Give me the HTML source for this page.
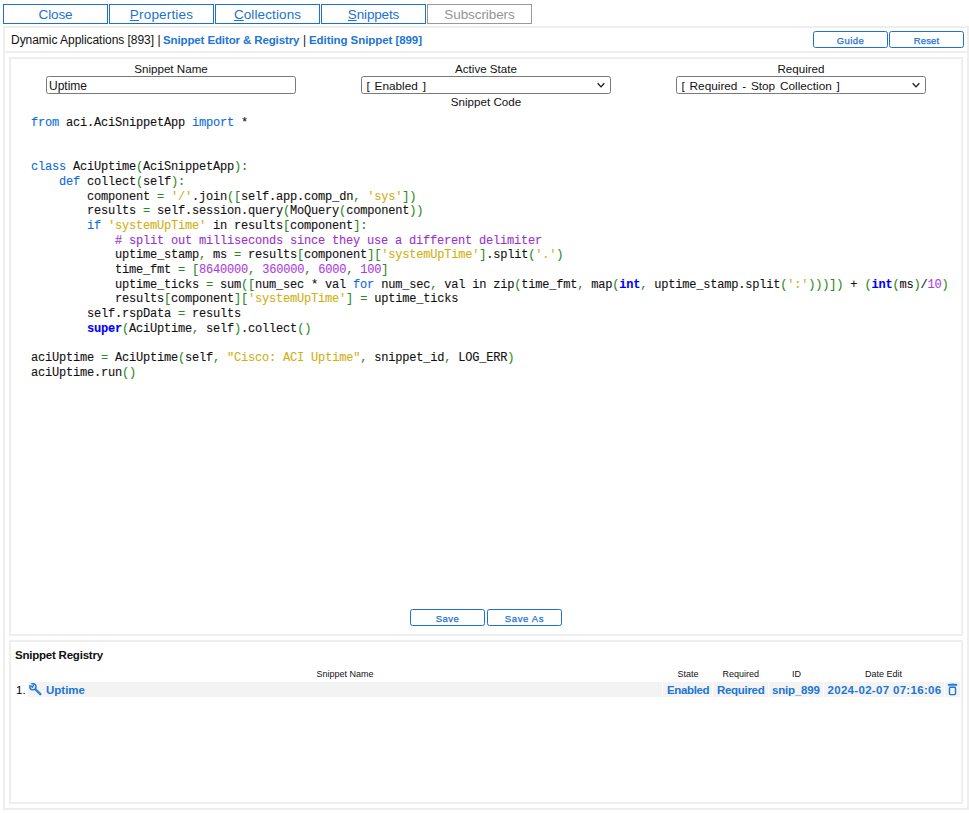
<!DOCTYPE html>
<html>
<head>
<meta charset="utf-8">
<title>Snippet Editor</title>
<style>
html,body{margin:0;padding:0;background:#fff;}
body{width:969px;height:813px;position:relative;overflow:hidden;font-family:"Liberation Sans",sans-serif;font-size:12px;color:#111;}
.abs{position:absolute;}
.tab{position:absolute;top:4px;height:18px;width:103px;border:1px solid #1b71d1;color:#1b71d1;font-size:13.5px;line-height:20px;text-align:center;background:#fff;}
.tab.dis{border-color:#999;color:#949494;}
.tab u{text-decoration:underline;text-underline-offset:1px;text-decoration-thickness:1px;}
.frame{position:absolute;border:2px solid #eee;box-sizing:border-box;}
.hline{position:absolute;background:#eee;}
.btn{position:absolute;box-sizing:border-box;border:1px solid #1b71d1;border-radius:2.5px;color:#1b71d1;font-size:9.5px;text-align:center;background:#fff;width:75px;height:17px;line-height:17px;-webkit-text-stroke:0.25px #1b71d1;}
.lbl{position:absolute;font-size:11.6px;line-height:14px;text-align:center;color:#111;white-space:nowrap;}
.inp{position:absolute;box-sizing:border-box;border:1px solid #7a7a7a;border-radius:2.5px;background:#fff;font-size:12px;line-height:16px;color:#111;white-space:nowrap;}
.chev{position:absolute;right:4px;top:5px;}
.code{position:absolute;left:31px;top:116px;font-family:"Liberation Mono",monospace;font-size:12px;letter-spacing:-0.2px;color:#111;white-space:pre;-webkit-text-stroke:0.1px currentColor;}
.code div{position:absolute;left:0;height:15px;line-height:15px;}
.k{color:#0b6be0;} .b{color:#0000ff;font-weight:bold;} .s{color:#d0b010;} .c{color:#9932cc;} .n{color:#ac3fdc;} .p{color:#2a8a22;}
.hd{font-size:12px;line-height:14px;white-space:nowrap;}
.rh{position:absolute;top:669px;font-size:9px;line-height:11px;color:#111;white-space:nowrap;}
.cell{position:absolute;top:682px;height:15px;background:#f3f3f3;}
.rt{position:absolute;top:683px;line-height:14px;color:#2075d5;font-weight:bold;white-space:nowrap;}
.link{color:#2075d5;font-weight:bold;}
</style>
</head>
<body>
<div class="tab" style="left:3px;letter-spacing:-0.14px">Close</div>
<div class="tab" style="left:109px;letter-spacing:0.18px"><u>P</u>roperties</div>
<div class="tab" style="left:215px;letter-spacing:0.11px"><u>C</u>ollections</div>
<div class="tab" style="left:321px;letter-spacing:-0.15px"><u>S</u>nippets</div>
<div class="tab dis" style="left:427px;letter-spacing:-0.08px">Subscribers</div>

<div class="frame" style="left:3px;top:26px;width:966px;height:784px;"></div>
<div class="hline" style="left:5px;top:51px;width:962px;height:2px;"></div>

<div class="abs hd" style="left:11px;top:33px;letter-spacing:-0.04px;">Dynamic Applications [893]</div>
<div class="abs hd" style="left:157.5px;top:33px;">|</div>
<div class="abs hd link" style="left:163px;top:33px;font-size:11.5px;letter-spacing:-0.12px;">Snippet Editor &amp; Registry</div>
<div class="abs hd" style="left:303px;top:33px;">|</div>
<div class="abs hd link" style="left:309px;top:33px;font-size:11.5px;letter-spacing:-0.07px;">Editing Snippet [899]</div>
<div class="btn" style="left:813px;top:31px;letter-spacing:0.45px;">Guide</div>
<div class="btn" style="left:889px;top:31px;letter-spacing:0.15px;">Reset</div>

<div class="frame" style="left:9px;top:57px;width:954px;height:579px;"></div>

<div class="lbl" style="left:46px;top:62px;width:250px;">Snippet Name</div>
<div class="lbl" style="left:361px;top:62px;width:250px;">Active State</div>
<div class="lbl" style="left:676px;top:62px;width:250px;">Required</div>
<div class="inp" style="left:46px;top:76px;width:250px;height:18px;padding-left:2px;line-height:18px;">Uptime</div>
<div class="inp" style="left:361px;top:76px;width:250px;height:18px;padding-left:4.5px;font-size:11.8px;word-spacing:1.5px;line-height:18px;">[ Enabled ]<svg class="chev" width="10" height="7" viewBox="0 0 10 7"><path d="M1.7 1.3 L5 4.9 L8.3 1.3" fill="none" stroke="#1a1a1a" stroke-width="1.3"/></svg></div>
<div class="inp" style="left:676px;top:76px;width:250px;height:18px;padding-left:4.5px;font-size:11.8px;word-spacing:1.5px;line-height:18px;">[ Required - Stop Collection ]<svg class="chev" width="10" height="7" viewBox="0 0 10 7"><path d="M1.7 1.3 L5 4.9 L8.3 1.3" fill="none" stroke="#1a1a1a" stroke-width="1.3"/></svg></div>
<div class="lbl" style="left:361px;top:95px;width:250px;">Snippet Code</div>

<div class="code"><div style="top:0px"><span class="k">from</span> aci.AciSnippetApp <span class="k">import</span> *</div><div style="top:44px"><span class="k">class</span> AciUptime<span class="p">(</span>AciSnippetApp<span class="p">):</span></div><div style="top:59px">    <span class="k">def</span> collect<span class="p">(</span>self<span class="p">):</span></div><div style="top:74px">        component <span class="p">=</span> <span class="s">'/'</span>.join<span class="p">([</span>self.app.comp_dn<span class="p">,</span> <span class="s">'sys'</span><span class="p">])</span></div><div style="top:88px">        results <span class="p">=</span> self.session.query<span class="p">(</span>MoQuery<span class="p">(</span>component<span class="p">))</span></div><div style="top:103px">        <span class="k">if</span> <span class="s">'systemUpTime'</span> in results<span class="p">[</span>component<span class="p">]:</span></div><div style="top:118px">            <span class="c"># split out milliseconds since they use a different delimiter</span></div><div style="top:132px">            uptime_stamp<span class="p">,</span> ms <span class="p">=</span> results<span class="p">[</span>component<span class="p">][</span><span class="s">'systemUpTime'</span><span class="p">]</span>.split<span class="p">(</span><span class="s">'.'</span><span class="p">)</span></div><div style="top:147px">            time_fmt <span class="p">=</span> <span class="p">[</span><span class="n">8640000</span><span class="p">,</span> <span class="n">360000</span><span class="p">,</span> <span class="n">6000</span><span class="p">,</span> <span class="n">100</span><span class="p">]</span></div><div style="top:162px">            uptime_ticks <span class="p">=</span> sum<span class="p">([</span>num_sec * val <span class="k">for</span> num_sec<span class="p">,</span> val in zip<span class="p">(</span>time_fmt<span class="p">,</span> map<span class="p">(</span><span class="b">int</span><span class="p">,</span> uptime_stamp.split<span class="p">(</span><span class="s">':'</span><span class="p">)))])</span> + <span class="p">(</span><span class="b">int</span><span class="p">(</span>ms<span class="p">)</span>/<span class="n">10</span><span class="p">)</span></div><div style="top:176px">            results<span class="p">[</span>component<span class="p">][</span><span class="s">'systemUpTime'</span><span class="p">]</span> <span class="p">=</span> uptime_ticks</div><div style="top:191px">        self.rspData <span class="p">=</span> results</div><div style="top:206px">        <span class="b">super</span><span class="p">(</span>AciUptime<span class="p">,</span> self<span class="p">)</span>.collect<span class="p">()</span></div><div style="top:235px">aciUptime <span class="p">=</span> AciUptime<span class="p">(</span>self<span class="p">,</span> <span class="s">"Cisco: ACI Uptime"</span><span class="p">,</span> snippet_id<span class="p">,</span> LOG_ERR<span class="p">)</span></div><div style="top:250px">aciUptime.run<span class="p">()</span></div></div>

<div class="btn" style="left:410px;top:609px;letter-spacing:0.4px;">Save</div>
<div class="btn" style="left:487px;top:609px;letter-spacing:0.65px;">Save As</div>

<div class="frame" style="left:9px;top:640px;width:954px;height:164px;"></div>
<div class="abs" style="left:15px;top:648px;font-size:11.5px;line-height:14px;font-weight:bold;letter-spacing:-0.22px;white-space:nowrap;">Snippet Registry</div>
<div class="rh" style="left:316.5px;">Snippet Name</div>
<div class="rh" style="left:677.5px;">State</div>
<div class="rh" style="left:722.5px;">Required</div>
<div class="rh" style="left:792px;">ID</div>
<div class="rh" style="left:865px;">Date Edit</div>
<div class="cell" style="left:28px;width:634px;"></div>
<div class="cell" style="left:663px;width:49px;"></div>
<div class="cell" style="left:713px;width:55px;"></div>
<div class="cell" style="left:769px;width:54px;"></div>
<div class="cell" style="left:824px;width:120px;"></div>
<div class="cell" style="left:945px;width:15px;"></div>
<div class="rt" style="left:16px;color:#000;font-weight:normal;font-size:11.5px;">1.</div>
<svg class="abs" style="left:28px;top:682px;" width="15" height="15" viewBox="0 0 15 15"><path d="M7.4 7.2 L12.3 12.1" stroke="#1f74d2" stroke-width="2.3" stroke-linecap="round" fill="none"/><path d="M7.8 7.6 L12.2 12.0" stroke="#c9dcf3" stroke-width="0.8" stroke-dasharray="0.7 0.8" fill="none"/><circle cx="4.9" cy="4.8" r="3.1" fill="#e3edf9" stroke="#1f74d2" stroke-width="1.4"/><path d="M4.9 4.8 L1.2 1.1" stroke="#f3f3f3" stroke-width="1.4" fill="none"/><path d="M3.1 4.0 L4.5 5.3 L5.5 3.3" stroke="#1f74d2" stroke-width="1.2" fill="none" stroke-linejoin="round" stroke-linecap="round"/></svg>
<div class="rt" style="left:46px;font-size:11.5px;">Uptime</div>
<div class="rt" style="left:667px;font-size:11.5px;letter-spacing:-0.37px;">Enabled</div>
<div class="rt" style="left:717px;font-size:11.5px;letter-spacing:-0.3px;">Required</div>
<div class="rt" style="left:772px;font-size:11.5px;letter-spacing:-0.19px;">snip_899</div>
<div class="rt" style="left:827.5px;font-size:11.5px;letter-spacing:0.31px;">2024-02-07 07:16:06</div>
<svg class="abs" style="left:945px;top:682px;" width="15" height="15" viewBox="0 0 15 15"><rect x="2.9" y="1.9" width="9.2" height="1.9" fill="#2176d4"/><rect x="6.2" y="1.2" width="2.6" height="1" fill="#7fb0e6"/><rect x="3.8" y="3.8" width="7.4" height="1.0" fill="#8ab6e8"/><rect x="4.5" y="5.4" width="6.0" height="7.2" rx="1" ry="1" fill="#f6f6f6" stroke="#1f74d2" stroke-width="1.4"/></svg>
</body>
</html>
